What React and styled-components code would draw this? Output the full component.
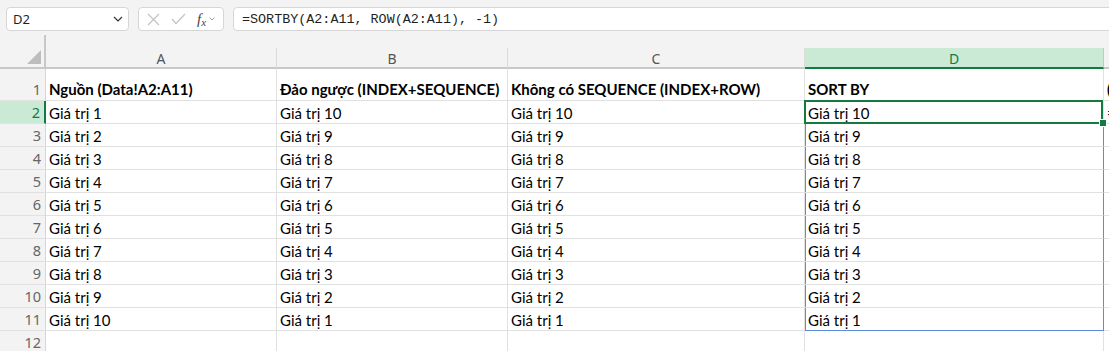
import styled, { createGlobalStyle } from "styled-components"

const GlobalStyle = createGlobalStyle`
  html, body {
    margin: 0;
    padding: 0;
    background: #f3f3f3;
    overflow: hidden;
  }
  * { box-sizing: border-box; }
`

const columns = [
  { name: "A", width: 231 },
  { name: "B", width: 231 },
  { name: "C", width: 297 },
  { name: "D", width: 299 },
  { name: "E", width: 200 },
]

const headers = [
  "Nguồn (Data!A2:A11)",
  "Đảo ngược (INDEX+SEQUENCE)",
  "Không có SEQUENCE (INDEX+ROW)",
  "SORT BY",
  "(Công thức)",
]

const rows = Array.from({ length: 10 }, (_, i) => [
  "Giá trị " + (i + 1),
  "Giá trị " + (10 - i),
  "Giá trị " + (10 - i),
  "Giá trị " + (10 - i),
  i === 0 ? "=SORTBY(A2:A11, ROW(A2:A11), -1)" : "",
])

export default function App() {
  return (
    <>
      <GlobalStyle />
      <Page>
        <FormulaBar>
          <NameBox>
            <span>D2</span>
            <svg width="10" height="6" viewBox="0 0 10 6">
              <path d="M1 1 L5 5 L9 1" fill="none" stroke="#333" strokeWidth="1.2" />
            </svg>
          </NameBox>
          <ButtonGroup>
            <svg width="13" height="13" viewBox="0 0 13 13">
              <path d="M1 1 L12 12 M12 1 L1 12" stroke="#c4c4c4" strokeWidth="1.2" />
            </svg>
            <svg width="15" height="12" viewBox="0 0 15 12">
              <path d="M1 6 L5 10.5 L14 1" fill="none" stroke="#c4c4c4" strokeWidth="1.2" />
            </svg>
            <Fx>
              f<sub>x</sub>
            </Fx>
            <svg width="6" height="4" viewBox="0 0 6 4">
              <path d="M0.5 0.5 L3 3 L5.5 0.5" fill="none" stroke="#a0a0a0" strokeWidth="1" />
            </svg>
          </ButtonGroup>
          <FormulaInput>=SORTBY(A2:A11, ROW(A2:A11), -1)</FormulaInput>
        </FormulaBar>

        <TopStrip>
          <StripCorner />
        </TopStrip>

        <Sheet>
          <Corner>
            <svg width="14" height="14" viewBox="0 0 14 14">
              <polygon points="14,0 14,14 0,14" fill="#bdbdbd" />
            </svg>
          </Corner>
          {columns.map((c) => (
            <ColHeader key={c.name} $active={c.name === "D"}>
              {c.name}
            </ColHeader>
          ))}

          <RowHeader>1</RowHeader>
          {headers.map((h, i) => (
            <Cell key={i} $bold $tall>
              {h}
            </Cell>
          ))}

          {rows.map((r, ri) => (
            <Row key={ri} num={ri + 2} values={r} />
          ))}

          <RowHeader>12</RowHeader>
          {columns.map((c) => (
            <Cell key={c.name} />
          ))}
        </Sheet>
      </Page>
    </>
  )
}

function Row({ num, values }) {
  return (
    <>
      <RowHeader $active={num === 2}>{num}</RowHeader>
      {values.map((v, i) => {
        const inD = i === 3
        return (
          <Cell
            key={i}
            $active={inD && num === 2}
            $spill={inD && num > 2}
            $spillEnd={inD && num === 11}
          >
            {v}
          </Cell>
        )
      })}
    </>
  )
}

const Page = styled.div`
  width: 1109px;
  height: 351px;
  overflow: hidden;
  background: #f3f3f3;
`

const FormulaBar = styled.div`
  display: flex;
  align-items: center;
  gap: 9px;
  padding: 7px 0 0 6px;
  height: 31px;
`

const NameBox = styled.div`
  width: 123px;
  height: 24px;
  display: flex;
  align-items: center;
  justify-content: space-between;
  padding: 0 5px 0 6px;
  background: #fff;
  border: 1px solid #d6d6d6;
  border-radius: 4px;
  font-family: "Noto Sans", "Open Sans", sans-serif;
  font-size: 13px;
  color: #1f1f1f;
`

const ButtonGroup = styled.div`
  width: 86px;
  height: 24px;
  display: flex;
  align-items: center;
  gap: 11px;
  padding: 0 0 0 8px;
  background: #fff;
  border: 1px solid #d6d6d6;
  border-radius: 4px;
`

const Fx = styled.span`
  font-family: "Liberation Serif", serif;
  font-style: italic;
  font-size: 15px;
  color: #444;
  margin-right: -8px;

  sub {
    font-size: 11px;
    vertical-align: -2px;
  }
`

const FormulaInput = styled.div`
  flex: 1;
  height: 24px;
  margin-right: -6px;
  display: flex;
  align-items: center;
  padding-left: 8px;
  background: #fff;
  border: 1px solid #d6d6d6;
  border-radius: 4px 0 0 4px;
  font-family: "Liberation Mono", "DejaVu Sans Mono", monospace;
  font-size: 13.4px;
  color: #1f1f1f;
`

const TopStrip = styled.div`
  display: flex;
  height: 13px;
  margin-top: 4px;
`

const StripCorner = styled.div`
  width: 46px;
  border-right: 2px solid #c8c8c8;
`

const Sheet = styled.div`
  display: grid;
  grid-template-columns: 46px ${columns.map((c) => c.width + "px").join(" ")};
  grid-template-rows: 21px 32px repeat(11, 23px);
  font-family: "Lato", "Liberation Sans", sans-serif;
`

const Corner = styled.div`
  display: flex;
  align-items: flex-end;
  justify-content: flex-end;
  padding: 0 3px 3px 0;
  border-right: 2px solid #c8c8c8;
  border-bottom: 2px solid #c8c8c8;
`

const ColHeader = styled.div`
  display: flex;
  align-items: center;
  justify-content: center;
  background: ${(p) => (p.$active ? "#caead6" : "#f3f3f3")};
  border-right: 1px solid ${(p) => (p.$active ? "#a9d8b9" : "#dadada")};
  border-bottom: 2px solid ${(p) => (p.$active ? "#137a42" : "#c8c8c8")};
  color: ${(p) => (p.$active ? "#107c41" : "#555")};
  font-family: "Noto Sans", "Open Sans", sans-serif;
  font-size: 14px;
  padding-top: 1px;
`

const RowHeader = styled.div`
  display: flex;
  align-items: flex-end;
  justify-content: flex-end;
  padding: 0 4px 1px 0;
  background: ${(p) => (p.$active ? "#caead6" : "#f3f3f3")};
  border-right: ${(p) => (p.$active ? "2px solid #137a42" : "1px solid #d6d6d6")};
  border-bottom: 1px solid #e1e1e1;
  color: ${(p) => (p.$active ? "#137a42" : "#666")};
  font-family: "Noto Sans", "Open Sans", sans-serif;
  font-size: 14.5px;
`

const Cell = styled.div`
  position: relative;
  display: flex;
  align-items: flex-end;
  padding: 0 3px ${(p) => (p.$tall ? "2px" : "1px")};
  background: #fff;
  border-right: 1px solid ${(p) => (p.$spill ? "#5b8ddb" : "#e1e1e1")};
  border-bottom: 1px solid ${(p) => (p.$spillEnd ? "#5b8ddb" : "#e1e1e1")};
  box-shadow: ${(p) => (p.$spill ? "inset 1px 0 0 #5b8ddb" : "none")};
  font-size: 15px;
  font-weight: ${(p) => (p.$bold ? 700 : 400)};
  color: #000;
  white-space: nowrap;
  overflow: ${(p) => (p.$active ? "visible" : "hidden")};

  ${(p) =>
    p.$active &&
    `
    z-index: 2;
    &::after {
      content: "";
      position: absolute;
      inset: -1px 0 -1px -1px;
      border: 2px solid #137a42;
    }
    &::before {
      content: "";
      position: absolute;
      right: -4px;
      bottom: -4px;
      width: 6px;
      height: 6px;
      background: #137a42;
      border: 1px solid #fff;
      z-index: 1;
    }
  `}
`
